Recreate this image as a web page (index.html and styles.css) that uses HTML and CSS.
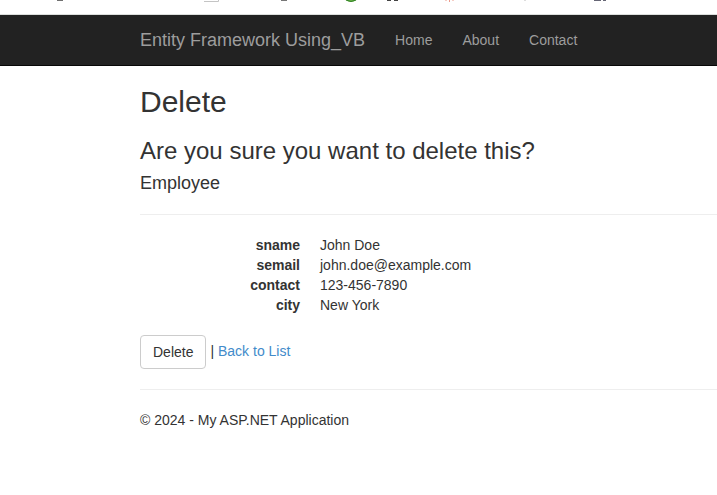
FILE: index.html
```html
<!DOCTYPE html>
<html lang="en">
<head>
<meta charset="utf-8">
<title>Delete - Entity Framework Using_VB</title>
<link rel="stylesheet" href="styles.css">
</head>
<body>
<div class="browser-strip">
<svg width="717" height="14" viewBox="0 0 717 14" aria-hidden="true">
<path d="M57 0h6v1h-6z" fill="#707070"/>
<path d="M204 1.5h14.5V0" fill="none" stroke="#c4c4c4"/>
<path d="M281 0h6v1h-6z" fill="#777"/>
<path d="M345.500 0q5.500 4 11 0z" fill="#6bb64a"/>
<path d="M346 0q5 3 10 0" fill="none" stroke="#348229"/>
<path d="M387 0h4v1h-4zM394 0h4v1h-4z" fill="#444"/>
<path d="M446 0v1M449.500 0v2M453 0v1" stroke="#ed9b8b"/>
<path d="M524 0h2v1h-2z" fill="#ddd"/>
<path d="M594 0h7v1h-7zM603 0h3v1h-3z" fill="#666675"/>
</svg>
</div>
<nav class="navbar">
<a class="brand">Entity Framework Using_VB</a>
<a class="link">Home</a>
<a class="link">About</a>
<a class="link">Contact</a>
</nav>
<main class="content">
<h2>Delete</h2>
<h3>Are you sure you want to delete this?</h3>
<h4>Employee</h4>
<hr>
<dl>
<dt>sname</dt><dd>John Doe</dd>
<dt>semail</dt><dd>john.doe@example.com</dd>
<dt>contact</dt><dd>123-456-7890</dd>
<dt>city</dt><dd>New York</dd>
</dl>
<div class="actions"><button class="btn">Delete</button><span class="after">| <a class="back">Back to List</a></span></div>
<hr>
<footer>© 2024 - My ASP.NET Application</footer>
</main>
</body>
</html>
```

FILE: styles.css
```css
* { box-sizing: border-box; }
body { margin: 0; height: 495px; overflow: hidden; background: #fff; color: #333; font: 14px/20px "Liberation Sans", Arial, sans-serif; }
.browser-strip { height: 15px; border-bottom: 1px solid #dcdfdd; }
.browser-strip svg { display: block; }
.navbar { height: 51px; background: #222; border-bottom: 1px solid #080808; padding-left: 140px; display: flex; color: #9d9d9d; line-height: 50px; }
.brand { font-size: 18px; margin-right: 15px; }
.link { padding: 0 15px; }
.content { padding-left: 140px; }
h2, h3, h4 { font-weight: 400; line-height: 1.1; margin: 0; }
h2 { font-size: 30px; margin: 19px 0 20px; }
h3 { font-size: 24px; margin-bottom: 10px; }
h4 { font-size: 18px; }
hr { border: 0; border-top: 1px solid #eee; margin: 20px 0; }
dl { display: grid; grid-template-columns: 160px 1fr; column-gap: 20px; margin: 0 0 20px; }
dt { font-weight: 700; text-align: right; }
dd { margin: 0; }
.actions { display: flex; align-items: flex-start; }
.btn { font: inherit; color: #333; background: #fff; border: 1px solid #ccc; border-radius: 4px; padding: 6px 12px; }
.after { margin: 6px 0 0 4px; }
.back { color: #428bca; }
footer { margin-top: 20px; }
```
